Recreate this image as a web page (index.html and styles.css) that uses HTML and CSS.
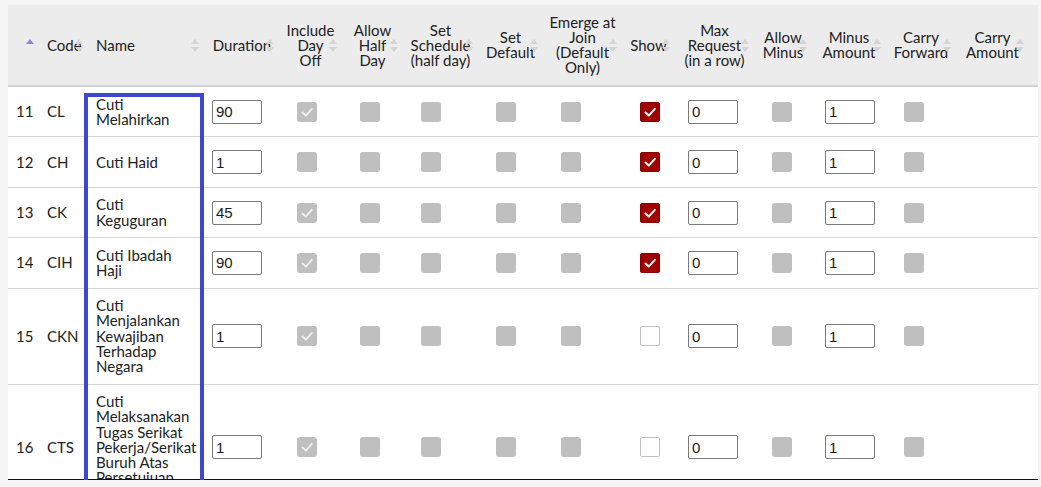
FILE: index.html
```html
<!DOCTYPE html>
<html lang="en">
<head>
<meta charset="utf-8">
<title>Leave Types</title>
<link rel="stylesheet" href="styles.css">
</head>
<body>
<div class="panel">
  <div class="scroll">
    <table class="grid">
      <colgroup>
        <col class="w-no"><col class="w-code"><col class="w-name"><col class="w-dur">
        <col class="w-inc"><col class="w-half"><col class="w-sched"><col class="w-def">
        <col class="w-emerge"><col class="w-show"><col class="w-max"><col class="w-aminus">
        <col class="w-mamount"><col class="w-cfwd"><col class="w-camount"><col class="w-gutter">
      </colgroup>
      <thead>
        <tr>
          <th class="left first"><svg class="sort sort-edge" viewBox="0 0 8 13" width="8" height="13"><path d="M0 5 L4 0 L8 5 Z" fill="#8f84e2"/></svg></th>
          <th class="left">Code<svg class="sort sort-edge" viewBox="0 0 8 13" width="8" height="13"><path d="M0 5 L4 0 L8 5 Z M0 8 L4 13 L8 8 Z" fill="#d4d4d4"/></svg></th>
          <th class="left">Name<svg class="sort sort-edge" viewBox="0 0 8 13" width="8" height="13"><path d="M0 5 L4 0 L8 5 Z M0 8 L4 13 L8 8 Z" fill="#d4d4d4"/></svg></th>
          <th class="dur">Duration<svg class="sort" viewBox="0 0 8 13" width="8" height="13"><path d="M0 5 L4 0 L8 5 Z M0 8 L4 13 L8 8 Z" fill="#d4d4d4"/></svg></th>
          <th>Include<br>Day<br>Off<svg class="sort" viewBox="0 0 8 13" width="8" height="13"><path d="M0 5 L4 0 L8 5 Z M0 8 L4 13 L8 8 Z" fill="#d4d4d4"/></svg></th>
          <th>Allow<br>Half<br>Day<svg class="sort" viewBox="0 0 8 13" width="8" height="13"><path d="M0 5 L4 0 L8 5 Z M0 8 L4 13 L8 8 Z" fill="#d4d4d4"/></svg></th>
          <th>Set<br>Schedule<br>(half day)<svg class="sort" viewBox="0 0 8 13" width="8" height="13"><path d="M0 5 L4 0 L8 5 Z M0 8 L4 13 L8 8 Z" fill="#d4d4d4"/></svg></th>
          <th>Set<br>Default<svg class="sort" viewBox="0 0 8 13" width="8" height="13"><path d="M0 5 L4 0 L8 5 Z M0 8 L4 13 L8 8 Z" fill="#d4d4d4"/></svg></th>
          <th>Emerge at<br>Join<br>(Default<br>Only)<svg class="sort" viewBox="0 0 8 13" width="8" height="13"><path d="M0 5 L4 0 L8 5 Z M0 8 L4 13 L8 8 Z" fill="#d4d4d4"/></svg></th>
          <th>Show<svg class="sort" viewBox="0 0 8 13" width="8" height="13"><path d="M0 5 L4 0 L8 5 Z M0 8 L4 13 L8 8 Z" fill="#d4d4d4"/></svg></th>
          <th>Max<br>Request<br>(in a row)<svg class="sort" viewBox="0 0 8 13" width="8" height="13"><path d="M0 5 L4 0 L8 5 Z M0 8 L4 13 L8 8 Z" fill="#d4d4d4"/></svg></th>
          <th>Allow<br>Minus<svg class="sort" viewBox="0 0 8 13" width="8" height="13"><path d="M0 5 L4 0 L8 5 Z M0 8 L4 13 L8 8 Z" fill="#d4d4d4"/></svg></th>
          <th>Minus<br>Amount<svg class="sort" viewBox="0 0 8 13" width="8" height="13"><path d="M0 5 L4 0 L8 5 Z M0 8 L4 13 L8 8 Z" fill="#d4d4d4"/></svg></th>
          <th>Carry<br>Forward<svg class="sort" viewBox="0 0 8 13" width="8" height="13"><path d="M0 5 L4 0 L8 5 Z M0 8 L4 13 L8 8 Z" fill="#d4d4d4"/></svg></th>
          <th>Carry<br>Amount<svg class="sort" viewBox="0 0 8 13" width="8" height="13"><path d="M0 5 L4 0 L8 5 Z M0 8 L4 13 L8 8 Z" fill="#d4d4d4"/></svg></th>
          <th class="gutter"></th>
        </tr>
      </thead>
      <tbody>
        <tr>
          <td class="first">11</td><td>CL</td><td class="name">Cuti Melahirkan</td>
          <td><input class="num" type="text" value="90"></td>
          <td><span class="cb cb-off"><svg viewBox="0 0 20 20" width="20" height="20"><path d="M5.5 10.5 L8.8 13.6 L14.8 6.8" fill="none" stroke="#f0f0f0" stroke-width="1.8" stroke-linecap="round" stroke-linejoin="round"/></svg></span></td>
          <td><span class="cb cb-off"></span></td>
          <td><span class="cb cb-off"></span></td>
          <td><span class="cb cb-off"></span></td>
          <td><span class="cb cb-off"></span></td>
          <td><span class="cb cb-on"><svg viewBox="0 0 20 20" width="20" height="20"><path d="M5.5 10.5 L8.8 13.6 L14.8 6.8" fill="none" stroke="#fff" stroke-width="2" stroke-linecap="round" stroke-linejoin="round"/></svg></span></td>
          <td><input class="num" type="text" value="0"></td>
          <td><span class="cb cb-off"></span></td>
          <td><input class="num" type="text" value="1"></td>
          <td><span class="cb cb-off"></span></td>
          <td></td><td></td>
        </tr>
        <tr>
          <td class="first">12</td><td>CH</td><td class="name">Cuti Haid</td>
          <td><input class="num" type="text" value="1"></td>
          <td><span class="cb cb-off"></span></td>
          <td><span class="cb cb-off"></span></td>
          <td><span class="cb cb-off"></span></td>
          <td><span class="cb cb-off"></span></td>
          <td><span class="cb cb-off"></span></td>
          <td><span class="cb cb-on"><svg viewBox="0 0 20 20" width="20" height="20"><path d="M5.5 10.5 L8.8 13.6 L14.8 6.8" fill="none" stroke="#fff" stroke-width="2" stroke-linecap="round" stroke-linejoin="round"/></svg></span></td>
          <td><input class="num" type="text" value="0"></td>
          <td><span class="cb cb-off"></span></td>
          <td><input class="num" type="text" value="1"></td>
          <td><span class="cb cb-off"></span></td>
          <td></td><td></td>
        </tr>
        <tr>
          <td class="first">13</td><td>CK</td><td class="name">Cuti Keguguran</td>
          <td><input class="num" type="text" value="45"></td>
          <td><span class="cb cb-off"><svg viewBox="0 0 20 20" width="20" height="20"><path d="M5.5 10.5 L8.8 13.6 L14.8 6.8" fill="none" stroke="#f0f0f0" stroke-width="1.8" stroke-linecap="round" stroke-linejoin="round"/></svg></span></td>
          <td><span class="cb cb-off"></span></td>
          <td><span class="cb cb-off"></span></td>
          <td><span class="cb cb-off"></span></td>
          <td><span class="cb cb-off"></span></td>
          <td><span class="cb cb-on"><svg viewBox="0 0 20 20" width="20" height="20"><path d="M5.5 10.5 L8.8 13.6 L14.8 6.8" fill="none" stroke="#fff" stroke-width="2" stroke-linecap="round" stroke-linejoin="round"/></svg></span></td>
          <td><input class="num" type="text" value="0"></td>
          <td><span class="cb cb-off"></span></td>
          <td><input class="num" type="text" value="1"></td>
          <td><span class="cb cb-off"></span></td>
          <td></td><td></td>
        </tr>
        <tr>
          <td class="first">14</td><td>CIH</td><td class="name">Cuti Ibadah Haji</td>
          <td><input class="num" type="text" value="90"></td>
          <td><span class="cb cb-off"><svg viewBox="0 0 20 20" width="20" height="20"><path d="M5.5 10.5 L8.8 13.6 L14.8 6.8" fill="none" stroke="#f0f0f0" stroke-width="1.8" stroke-linecap="round" stroke-linejoin="round"/></svg></span></td>
          <td><span class="cb cb-off"></span></td>
          <td><span class="cb cb-off"></span></td>
          <td><span class="cb cb-off"></span></td>
          <td><span class="cb cb-off"></span></td>
          <td><span class="cb cb-on"><svg viewBox="0 0 20 20" width="20" height="20"><path d="M5.5 10.5 L8.8 13.6 L14.8 6.8" fill="none" stroke="#fff" stroke-width="2" stroke-linecap="round" stroke-linejoin="round"/></svg></span></td>
          <td><input class="num" type="text" value="0"></td>
          <td><span class="cb cb-off"></span></td>
          <td><input class="num" type="text" value="1"></td>
          <td><span class="cb cb-off"></span></td>
          <td></td><td></td>
        </tr>
        <tr>
          <td class="first">15</td><td>CKN</td><td class="name">Cuti Menjalankan Kewajiban Terhadap Negara</td>
          <td><input class="num" type="text" value="1"></td>
          <td><span class="cb cb-off"><svg viewBox="0 0 20 20" width="20" height="20"><path d="M5.5 10.5 L8.8 13.6 L14.8 6.8" fill="none" stroke="#f0f0f0" stroke-width="1.8" stroke-linecap="round" stroke-linejoin="round"/></svg></span></td>
          <td><span class="cb cb-off"></span></td>
          <td><span class="cb cb-off"></span></td>
          <td><span class="cb cb-off"></span></td>
          <td><span class="cb cb-off"></span></td>
          <td><span class="cb cb-empty"></span></td>
          <td><input class="num" type="text" value="0"></td>
          <td><span class="cb cb-off"></span></td>
          <td><input class="num" type="text" value="1"></td>
          <td><span class="cb cb-off"></span></td>
          <td></td><td></td>
        </tr>
        <tr>
          <td class="first">16</td><td>CTS</td><td class="name">Cuti Melaksanakan Tugas Serikat Pekerja/Serikat Buruh Atas Persetujuan Pengusaha</td>
          <td><input class="num" type="text" value="1"></td>
          <td><span class="cb cb-off"><svg viewBox="0 0 20 20" width="20" height="20"><path d="M5.5 10.5 L8.8 13.6 L14.8 6.8" fill="none" stroke="#f0f0f0" stroke-width="1.8" stroke-linecap="round" stroke-linejoin="round"/></svg></span></td>
          <td><span class="cb cb-off"></span></td>
          <td><span class="cb cb-off"></span></td>
          <td><span class="cb cb-off"></span></td>
          <td><span class="cb cb-off"></span></td>
          <td><span class="cb cb-empty"></span></td>
          <td><input class="num" type="text" value="0"></td>
          <td><span class="cb cb-off"></span></td>
          <td><input class="num" type="text" value="1"></td>
          <td><span class="cb cb-off"></span></td>
          <td></td><td></td>
        </tr>
      </tbody>
    </table>
  </div>
  <div class="highlight"></div>
</div>
</body>
</html>
```
FILE: styles.css
```css
html, body {
  margin: 0;
  padding: 0;
  background: #f5f5f5;
}

body {
  padding: 5px 3px 0 8px;
  font-family: Lato, "Noto Sans", sans-serif;
  font-size: 15px;
  color: #222;
}

.panel {
  position: relative;
  width: 1030px;
}

.scroll {
  height: 474px;
  overflow: hidden;
  background: #fff;
  border-bottom: 1px solid #111;
}

.grid {
  width: 100%;
  table-layout: fixed;
  border-collapse: collapse;
  line-height: 15px;
}

.w-no { width: 26px; }
.w-code { width: 49px; }
.w-name { width: 116px; }
.w-dur { width: 80px; }
.w-inc { width: 63px; }
.w-half { width: 61px; }
.w-sched { width: 75px; }
.w-def { width: 65px; }
.w-emerge { width: 79px; }
.w-show { width: 53px; }
.w-max { width: 79px; }
.w-aminus { width: 58px; }
.w-mamount { width: 74px; }
.w-cfwd { width: 70px; }
.w-camount { width: 73px; }
.w-gutter { width: 9px; }

.grid th {
  position: relative;
  background: #ececec;
  font-weight: normal;
  color: #222;
  text-align: center;
  vertical-align: middle;
  white-space: nowrap;
  padding: 10px 5px;
  height: 60px;
  border-bottom: 2px solid #d4d4d4;
}

.grid th.left {
  text-align: left;
  padding-left: 13px;
}

.grid th.dur {
  padding-left: 9px;
  padding-right: 3px;
}

.grid th.first,
.grid td.first {
  padding-left: 8px;
}

.grid th.gutter {
  padding: 0;
}

.sort {
  position: absolute;
  right: 5px;
  top: 50%;
  margin-top: -6px;
  display: block;
}

.sort-edge {
  right: 0;
}

.grid td {
  padding: 9.5px 13px;
  vertical-align: middle;
  text-align: left;
  line-height: 15.2px;
  border-bottom: 1px solid #d6d6d6;
  height: 30.4px;
}

.grid td.name {
  overflow: visible;
}

.num {
  display: block;
  box-sizing: border-box;
  width: 50px;
  height: 24px;
  margin: 0;
  padding: 0 3px;
  border: 1px solid #7a7a7a;
  border-radius: 2px;
  background: #fff;
  font-family: "Liberation Sans", Arial, sans-serif;
  font-size: 15px;
  color: #1a1a1a;
}

.cb {
  display: block;
  box-sizing: border-box;
  width: 20px;
  height: 20px;
  margin-left: 5px;
  border-radius: 3px;
}

.cb svg {
  display: block;
}

.cb-off {
  background: #bfbfbf;
}

.cb-on {
  background: #a00000;
  box-shadow: inset 0 0 0 1px #8a0000;
}

.cb-empty {
  background: #fff;
  border: 1px solid #c2c2c2;
  border-radius: 2px;
}

.highlight {
  position: absolute;
  left: 76px;
  top: 88px;
  width: 120px;
  height: 391px;
  box-sizing: border-box;
  border: 4px solid #3f48cc;
  pointer-events: none;
}
```
